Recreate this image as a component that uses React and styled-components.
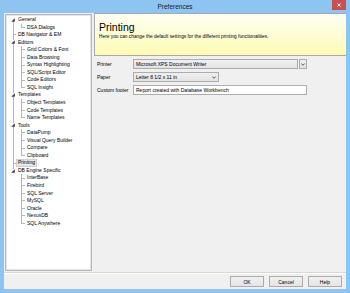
import React from 'react';
import styled, { createGlobalStyle } from 'styled-components';

const GlobalStyle = createGlobalStyle`
  html, body {
    margin: 0;
    padding: 0;
    width: 350px;
    height: 293px;
    overflow: hidden;
    font-family: "Liberation Sans", Arial, sans-serif;
  }
`;

const Window = styled.div`
  width: 350px;
  height: 293px;
  display: flex;
  flex-direction: column;
  background: #8ec4f2;
  box-sizing: border-box;
`;

const TitleBar = styled.div`
  height: 13px;
  display: grid;
  grid-template-columns: 1fr auto 1fr;
  align-items: center;
`;

const Title = styled.div`
  grid-column: 2;
  font-size: 6.5px;
  color: #1a1a1a;
  line-height: 13px;
`;

const CloseButton = styled.div`
  grid-column: 3;
  justify-self: end;
  align-self: start;
  width: 14px;
  height: 10px;
  margin-right: 4px;
  background: #c75050;
  display: flex;
  align-items: center;
  justify-content: center;
`;

const Client = styled.div`
  flex: 1;
  margin: 0 4px 4px 4px;
  background: #f0f0f0;
  display: flex;
  flex-direction: column;
`;

const Content = styled.div`
  flex: 1;
  display: flex;
  gap: 2px;
  padding: 1px 0 1px 1px;
  border-bottom: 1px solid #d7d7d7;
`;

const TreeBox = styled.div`
  width: 87px;
  box-sizing: border-box;
  background: #fff;
  border: 1px solid #b9b9b9;
  box-shadow: inset 0 0 0 1px #e3e3e3;
  padding: 1px 0 0 1px;
  font-size: 5px;
  color: #000;
`;

const Row = styled.div`
  display: flex;
  height: 7.55px;
  line-height: 7.55px;
  align-items: stretch;
`;

const lineColor = '#b8b8b8';

const vertical = (line, x) => {
  if (line === 'through') return [`linear-gradient(${lineColor},${lineColor})`, `${x}px 0 / 1px 100%`];
  if (line === 'start') return [`linear-gradient(${lineColor},${lineColor})`, `${x}px 100% / 1px 50%`];
  if (line === 'end') return [`linear-gradient(${lineColor},${lineColor})`, `${x}px 0 / 1px 50%`];
  return null;
};

const Guide = styled.div`
  width: 9px;
  flex: none;
  display: flex;
  align-items: center;
  background: ${p => {
    const layers = [];
    const v = vertical(p.$line, p.$x);
    if (v) layers.push(`${v[0]} ${v[1]} no-repeat`);
    if (p.$branch) layers.push(`linear-gradient(${lineColor},${lineColor}) ${p.$x}px 50% / ${9 - p.$x}px 1px no-repeat`);
    return layers.length ? layers.join(', ') : 'none';
  }};
`;

const Expander = styled.svg`
  width: 4px;
  height: 4px;
  margin-left: 4px;
  background: #fff;
`;

const Label = styled.span`
  padding: 0 1px;
  border: 1px solid ${p => (p.$selected ? '#cfcfcf' : 'transparent')};
  background: ${p => (p.$selected ? '#e6e6e6' : 'transparent')};
  white-space: nowrap;
  line-height: 5.55px;
  align-self: center;
`;

const Panel = styled.div`
  flex: 1;
  display: flex;
  flex-direction: column;
`;

const Header = styled.div`
  height: 43px;
  box-sizing: border-box;
  border: 1px solid #a8a8a8;
  border-right: none;
  margin-top: -1px;
  background: linear-gradient(#fffff4, #fdfbb2);
  padding: 7px 4px 0 4px;
`;

const HeaderTitle = styled.div`
  font-size: 10.5px;
  line-height: 12px;
  color: #000;
`;

const HeaderText = styled.div`
  font-size: 4.8px;
  line-height: 6px;
  color: #000;
  margin-top: 1px;
`;

const Form = styled.div`
  display: grid;
  grid-template-columns: 36px auto;
  grid-auto-rows: 10px;
  row-gap: 3px;
  padding: 3px 0 0 3px;
  font-size: 5px;
  color: #000;
  align-items: center;
`;

const FieldLabel = styled.div`
  line-height: 10px;
`;

const ComboWrap = styled.div`
  display: flex;
  gap: 1px;
  height: 10px;
`;

const Combo = styled.div`
  width: ${p => p.$width}px;
  height: 10px;
  box-sizing: border-box;
  border: 1px solid #acacac;
  background: linear-gradient(#f0f0f0, #e3e3e3);
  display: flex;
  align-items: center;
  justify-content: space-between;
  padding: 0 2px;
  line-height: 8px;
`;

const DropButton = styled.div`
  width: 8px;
  height: 10px;
  box-sizing: border-box;
  border: 1px solid #acacac;
  background: linear-gradient(#f0f0f0, #e3e3e3);
  display: flex;
  align-items: center;
  justify-content: center;
`;

const TextInput = styled.div`
  width: 174px;
  height: 10px;
  box-sizing: border-box;
  border: 1px solid #abadb3;
  background: #fff;
  padding: 0 2px;
  line-height: 8px;
`;

const Footer = styled.div`
  height: 16px;
  display: flex;
  justify-content: flex-end;
  align-items: flex-start;
  gap: 5px;
  padding: 2px 4px 0 0;
  box-sizing: border-box;
  border-top: 1px solid #fff;
`;

const Button = styled.div`
  width: 34px;
  height: 11px;
  box-sizing: border-box;
  border: 1px solid #acacac;
  background: linear-gradient(#f0f0f0, #e5e5e5);
  font-size: 5px;
  color: #000;
  display: flex;
  align-items: center;
  justify-content: center;
`;

const Chevron = () => (
  <svg width="4" height="3" viewBox="0 0 4 3">
    <path d="M0.3 0.5 L2 2.3 L3.7 0.5" fill="none" stroke="#333" strokeWidth="0.8" />
  </svg>
);

const tree = [
  { label: 'General', children: ['DSA Dialogs'] },
  { label: 'DB Navigator & EM' },
  { label: 'Editors', children: ['Grid Colors & Font', 'Data Browsing', 'Syntax Highlighting', 'SQL/Script Editor', 'Code Editors', 'SQL Insight'] },
  { label: 'Templates', children: ['Object Templates', 'Code Templates', 'Name Templates'] },
  { label: 'Tools', children: ['DataPump', 'Visual Query Builder', 'Compare', 'Clipboard'] },
  { label: 'Printing', selected: true },
  { label: 'DB Engine Specific', children: ['InterBase', 'Firebird', 'SQL Server', 'MySQL', 'Oracle', 'NexusDB', 'SQL Anywhere'] },
];

const Tree = () => {
  const rows = [];
  tree.forEach((node, i) => {
    const isLast = i === tree.length - 1;
    const rootLine = i === 0 ? 'start' : isLast ? 'end' : 'through';
    rows.push(
      <Row key={node.label}>
        <Guide $line={rootLine} $x={6} $branch={!node.children}>
          {node.children && (
            <Expander viewBox="0 0 4 4">
              <polygon points="3.8,0.2 3.8,3.8 0.2,3.8" fill="#3a3a3a" />
            </Expander>
          )}
        </Guide>
        <Label $selected={node.selected}>{node.label}</Label>
      </Row>
    );
    (node.children || []).forEach((child, j) => {
      const lastChild = j === node.children.length - 1;
      rows.push(
        <Row key={child}>
          <Guide $line={isLast ? 'none' : 'through'} $x={6} />
          <Guide $line={lastChild ? 'end' : 'through'} $x={5} $branch />
          <Label>{child}</Label>
        </Row>
      );
    });
  });
  return <TreeBox>{rows}</TreeBox>;
};

export default function App() {
  return (
    <>
      <GlobalStyle />
      <Window>
        <TitleBar>
          <Title>Preferences</Title>
          <CloseButton>
            <svg width="4" height="4" viewBox="0 0 4 4">
              <path d="M0.5 0.5 L3.5 3.5 M3.5 0.5 L0.5 3.5" stroke="#fff" strokeWidth="1" />
            </svg>
          </CloseButton>
        </TitleBar>
        <Client>
          <Content>
            <Tree />
            <Panel>
              <Header>
                <HeaderTitle>Printing</HeaderTitle>
                <HeaderText>Here you can change the default settings for the different printing functionalities.</HeaderText>
              </Header>
              <Form>
                <FieldLabel>Printer</FieldLabel>
                <ComboWrap>
                  <Combo $width={165}>Microsoft XPS Document Writer</Combo>
                  <DropButton><Chevron /></DropButton>
                </ComboWrap>
                <FieldLabel>Paper</FieldLabel>
                <ComboWrap>
                  <Combo $width={86}>Letter 8 1/2 x 11 in<Chevron /></Combo>
                </ComboWrap>
                <FieldLabel>Custom footer</FieldLabel>
                <TextInput>Report created with Database Workbench</TextInput>
              </Form>
            </Panel>
          </Content>
          <Footer>
            <Button>OK</Button>
            <Button>Cancel</Button>
            <Button>Help</Button>
          </Footer>
        </Client>
      </Window>
    </>
  );
}
